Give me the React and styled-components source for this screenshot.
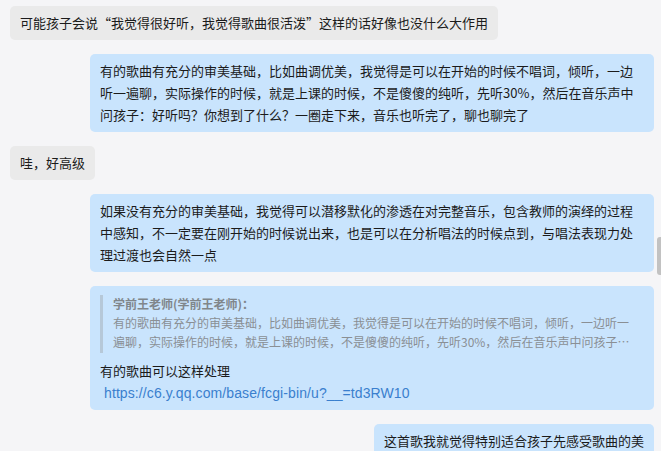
import React from 'react'
import styled, { createGlobalStyle } from 'styled-components'

const GlobalStyle = createGlobalStyle`
  html, body {
    margin: 0;
    padding: 0;
    background: #f5f5f7;
    overflow: hidden;
  }
  * {
    box-sizing: border-box;
  }
`

const messages = [
  { side: 'left', text: '可能孩子会说“我觉得很好听，我觉得歌曲很活泼”这样的话好像也没什么大作用' },
  {
    side: 'right',
    text: '有的歌曲有充分的审美基础，比如曲调优美，我觉得是可以在开始的时候不唱词，倾听，一边听一遍聊，实际操作的时候，就是上课的时候，不是傻傻的纯听，先听30%，然后在音乐声中问孩子：好听吗？你想到了什么？一圈走下来，音乐也听完了，聊也聊完了',
  },
  { side: 'left', text: '哇，好高级' },
  {
    side: 'right',
    text: '如果没有充分的审美基础，我觉得可以潜移默化的渗透在对完整音乐，包含教师的演绎的过程中感知，不一定要在刚开始的时候说出来，也是可以在分析唱法的时候点到，与唱法表现力处理过渡也会自然一点',
  },
  {
    side: 'right',
    quote: {
      author: '学前王老师(学前王老师)：',
      text: '有的歌曲有充分的审美基础，比如曲调优美，我觉得是可以在开始的时候不唱词，倾听，一边听一遍聊，实际操作的时候，就是上课的时候，不是傻傻的纯听，先听30%，然后在音乐声中问孩子：好听吗？你想到了什么？一圈走下来，音乐也听完了，聊也聊完了',
    },
    text: '有的歌曲可以这样处理',
    link: 'https://c6.y.qq.com/base/fcgi-bin/u?__=td3RW10',
  },
  { side: 'right', text: '这首歌我就觉得特别适合孩子先感受歌曲的美' },
]

function App() {
  return (
    <>
      <GlobalStyle />
      <Panel>
        <List>
          {messages.map((m, i) => (
            <Row key={i} $side={m.side}>
              <Bubble $side={m.side}>
                {m.quote && (
                  <Quote>
                    <QuoteAuthor>{m.quote.author}</QuoteAuthor>
                    <QuoteText>{m.quote.text}</QuoteText>
                  </Quote>
                )}
                <Text>{m.text}</Text>
                {m.link && <Link href="#">{m.link}</Link>}
              </Bubble>
            </Row>
          ))}
        </List>
        <ScrollThumb />
      </Panel>
    </>
  )
}

export default App

const Panel = styled.div`
  position: relative;
  width: 661px;
  height: 451px;
  overflow: hidden;
  padding: 6px 7px 0 10px;
  font-family: "Noto Sans CJK SC", "Liberation Sans", sans-serif;
  color: #1b1b1b;
`

const List = styled.div`
  display: flex;
  flex-direction: column;
  gap: 14px;
`

const Row = styled.div`
  display: flex;
  justify-content: ${p => (p.$side === 'right' ? 'flex-end' : 'flex-start')};
`

const Bubble = styled.div`
  max-width: 564px;
  padding: 6px 10px;
  border-radius: 5px;
  background: ${p => (p.$side === 'right' ? '#c9e4fd' : '#eaeaea')};
  display: flex;
  flex-direction: column;
`

const Text = styled.div`
  font-size: 13px;
  line-height: 22px;
  word-break: break-all;
`

const Quote = styled.div`
  margin-top: 3px;
  margin-bottom: 7px;
  padding: 0 10px 2px 10px;
  border-left: 3px solid #b6c8d8;
  color: #8a8f94;
`

const QuoteAuthor = styled.div`
  font-size: 12px;
  line-height: 18px;
  font-weight: bold;
  color: #80868b;
`

const QuoteText = styled.div`
  font-size: 12px;
  line-height: 19px;
  word-break: break-all;
  display: -webkit-box;
  -webkit-line-clamp: 2;
  -webkit-box-orient: vertical;
  overflow: hidden;
`

const Link = styled.a`
  margin-left: 4px;
  font-family: "Liberation Sans", sans-serif;
  font-size: 14px;
  line-height: 22px;
  letter-spacing: 0.1px;
  color: #3a7fce;
  text-decoration: none;
`

const ScrollThumb = styled.div`
  position: absolute;
  top: 237px;
  right: 0;
  width: 4px;
  height: 38px;
  border-radius: 3px 0 0 3px;
  background: #c2c2c2;
`
